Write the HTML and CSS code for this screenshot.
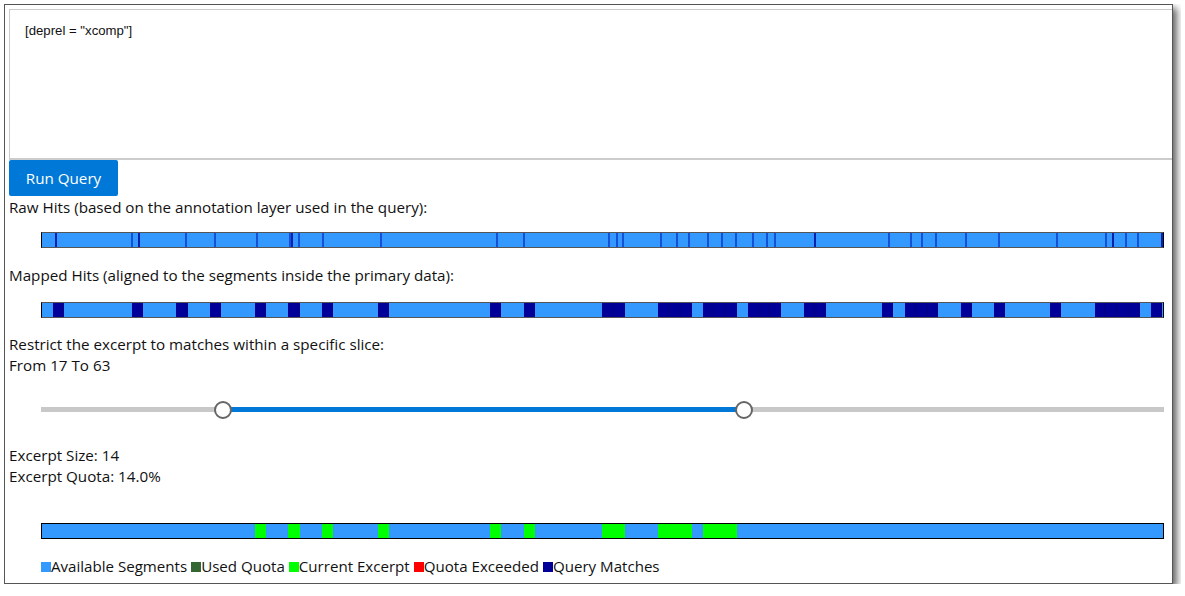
FILE: index.html
```html
<!DOCTYPE html>
<html lang="en">
<head>
    <meta charset="UTF-8">
    <title>Query Excerpt</title>
    <link rel="stylesheet" href="styles.css">
</head>
<body>
    <div class="window">
        <div class="editor">[deprel = "xcomp"]</div>
        <button class="run">Run Query</button>

        <p class="label label-raw">Raw Hits (based on the annotation layer used in the query):</p>
        <div class="bar bar-raw" id="raw"></div>

        <p class="label label-mapped">Mapped Hits (aligned to the segments inside the primary data):</p>
        <div class="bar bar-hits" id="mapped"></div>

        <p class="label label-slice">Restrict the excerpt to matches within a specific slice:</p>
        <p class="label">From 17 To 63</p>
        <div class="slider">
            <div class="track"></div>
            <div class="range" style="left: 16.2%; right: 37.4%"></div>
            <div class="thumb" style="left: 16.2%"></div>
            <div class="thumb" style="left: 62.6%"></div>
        </div>

        <p class="label">Excerpt Size: 14</p>
        <p class="label">Excerpt Quota: 14.0%</p>
        <div class="bar bar-excerpt" id="excerpt"></div>

        <div class="legend">
            <span class="key"><i class="swatch available"></i>Available Segments</span>
            <span class="key"><i class="swatch used"></i>Used Quota</span>
            <span class="key"><i class="swatch current"></i>Current Excerpt</span>
            <span class="key"><i class="swatch exceeded"></i>Quota Exceeded</span>
            <span class="key"><i class="swatch matches"></i>Query Matches</span>
        </div>
    </div>

    <script>
        // pixel positions of the raw hits, relative to the inside of the bar
        const rawHits = [14, 90, 97, 144, 173, 215, 248, 250, 257, 281, 339, 455, 482, 567, 575, 581,
            619, 635, 647, 666, 680, 694, 711, 725, 733, 773, 847, 869, 880, 894, 924, 957, 1015,
            1064, 1071, 1084, 1096, 1120];
        const strongHits = [14, 97, 250, 773, 1071, 1120];
        const mappedHits = [1, 8, 12, 15, 19, 22, 25, 30, 40, 43, 50, 51, 55, 56, 57, 59, 60, 61, 63, 64, 65,
            68, 69, 75, 77, 78, 79, 82, 85, 90, 94, 95, 96, 97, 99];
        const excerptHits = mappedHits.filter(n => n >= 17 && n < 63);

        const raw = document.getElementById('raw');
        rawHits.forEach(x => {
            const tick = document.createElement('span');
            tick.className = strongHits.includes(x) ? 'tick strong' : 'tick';
            tick.style.left = (x / 1121 * 100) + '%';
            raw.appendChild(tick);
        });

        const fillCells = (id, hits, cls) => {
            const bar = document.getElementById(id);
            for (let i = 0; i < 100; i++) {
                const cell = document.createElement('span');
                cell.className = hits.includes(i) ? 'cell ' + cls : 'cell';
                bar.appendChild(cell);
            }
        };
        fillCells('mapped', mappedHits, 'hit');
        fillCells('excerpt', excerptHits, 'picked');
    </script>
</body>
</html>
```

FILE: styles.css
```css
* { box-sizing: border-box; }

body {
    margin: 4px;
    background: #fff;
    font-family: "Open Sans", sans-serif;
    font-size: 15.2px;
    line-height: 21px;
    color: #111;
}

.window {
    height: 580px;
    width: 1169px;
    padding: 4px 0 0 4px;
    border: 1px solid #555;
    background: #fff;
    box-shadow: 4px 4px 7px rgba(0, 0, 0, .6);
}

/* --- QUERY ------------------------------------------- */
.editor {
    height: 151px;
    padding: 13px 15px;
    border: 1px solid #ccc;
    border-right: none;
    border-bottom-width: 2px;
    font-family: "Liberation Sans", sans-serif;
    font-size: 13.2px;
    line-height: 16px;
}

.run {
    display: block;
    width: 109px;
    height: 36px;
    border: none;
    border-radius: 2px;
    background: #0078d7;
    color: #fff;
    font-family: inherit;
    font-size: 15.2px;
}

.label { margin: 0; }
.label-raw { margin-top: 1px; }
.label-mapped { margin-top: 17px; }
.label-slice { margin-top: 16px; }

/* --- BARS -------------------------------------------- */
.bar {
    display: flex;
    position: relative;
    height: 16px;
    margin: 16px 8px 0 32px;
    border: 1px solid #000;
    background: #3399ff;
}
.bar-raw { margin-top: 14px; }
.bar-raw, .bar-hits { border-color: #555 #000 #555 #000; }
.bar-excerpt { margin-top: 36px; }

.cell { flex: 1; }
.cell.hit { background: #000099; box-shadow: inset -1px 0 rgba(0, 0, 60, .25); }
.cell.picked { background: #00ff00; }

.tick {
    position: absolute;
    top: 0;
    bottom: 0;
    width: 2px;
    margin-left: -1px;
    background: #1450d8;
}
.tick.strong { background: #0a1fb0; }

/* --- SLIDER ------------------------------------------ */
.slider {
    position: relative;
    height: 18px;
    margin: 25px 8px 26px 32px;
}
.track, .range {
    position: absolute;
    top: 6px;
    height: 5px;
}
.track { left: 0; right: 0; background: #c8c8c8; }
.range { background: #0078d7; }
.thumb {
    position: absolute;
    top: 0;
    width: 18px;
    height: 18px;
    margin-left: -9px;
    border: 2px solid #666;
    border-radius: 50%;
    background: #fff;
}

/* --- LEGEND ------------------------------------------ */
.legend {
    display: flex;
    gap: 4px;
    margin: 17px 0 0 32px;
    font-size: 15.1px;
}
.key { display: flex; align-items: center; }
.swatch { width: 10px; height: 10px; }
.available { background: #3399ff; }
.used { background: #336633; }
.current { background: #00ff00; }
.exceeded { background: #ff0000; }
.matches { background: #000099; }
```
